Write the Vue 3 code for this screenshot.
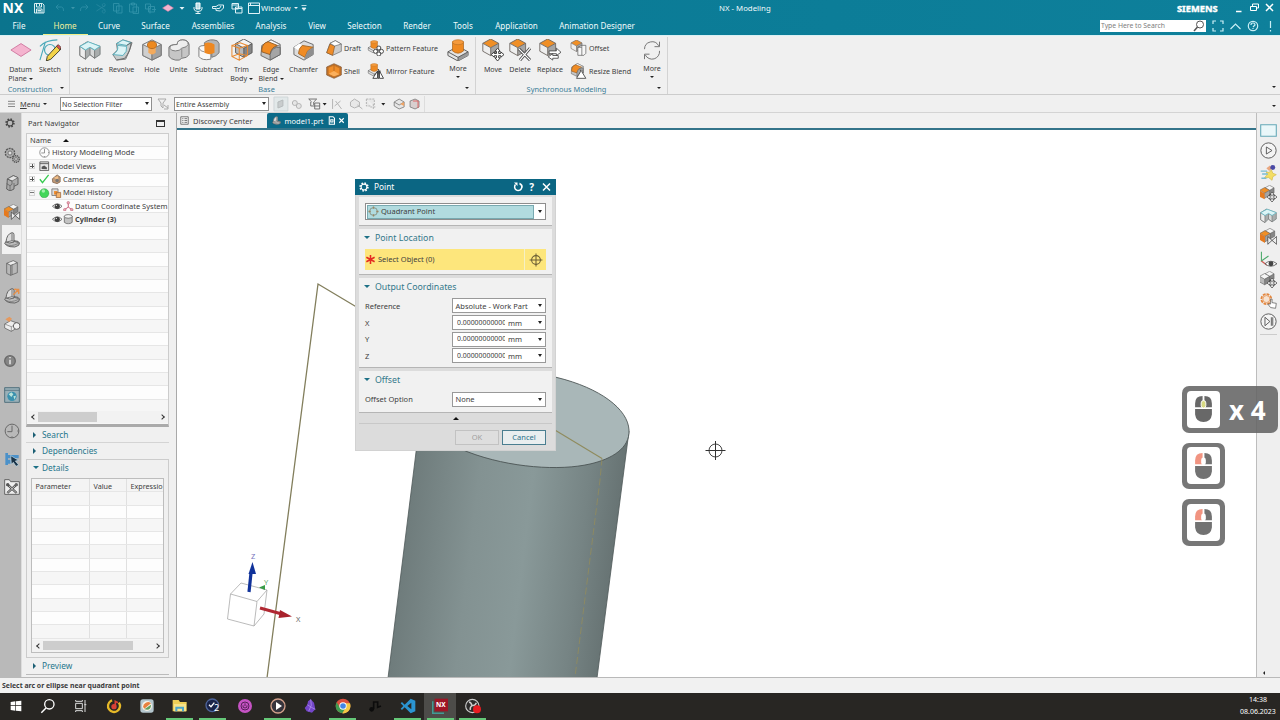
<script setup>
const tabs = [
  ['File', 38], ['Home', 54], ['Curve', 34], ['Surface', 59], ['Assemblies', 56], ['Analysis', 60],
  ['View', 32], ['Selection', 63], ['Render', 42], ['Tools', 50], ['Application', 57], ['Animation Designer', 104],
]
const quick = [
  ['save', 22], ['undo', 20], ['car', 6], ['redo', 16], ['cut', 18], ['copy', 16], ['paste', 16], ['pastes', 16],
  ['plane', 20], ['carw', 8], ['mic', 24], ['touch', 16], ['wins', 22], ['win', 12],
]
const construction = [['Datum', 'Plane', 'plane', 31], ['Sketch', '', 'sketch', 28]]
const base = [
  ['Extrude', '', 'extrude', 30], ['Revolve', '', 'revolve', 33], ['Hole', '', 'hole', 28], ['Unite', '', 'unite', 25],
  ['Subtract', '', 'subtract', 36], ['Trim', 'Body', 'trim', 29], ['Edge', 'Blend', 'edge', 30], ['Chamfer', '', 'chamfer', 35],
]
const sync = [['Move', '', 'move', 28], ['Delete', '', 'delete', 26], ['Replace', '', 'replace', 34]]
const railIcons = [
  ['gear', 19, 's'], ['gears', 24, 'm'], ['asm', 32, 'm'], ['constraint', 26, 'm'], ['part', 29, 'm on'], ['book', 27, 'm'],
  ['parto', 30, 'm'], ['reuse', 25, 'm'], ['info', 49, 'm'], ['web', 20, 'm'], ['clock', 52, 'm'], ['roles', 4, 'm'], ['tools', 52, 'm'],
]
const rightIcons = [
  ['rect', 16], ['play', 24], ['fly', 20], ['cubemove', 22], ['extrude', 22], ['constraint', 20], ['csyseye', 26],
  ['graymove', 14], ['gearhand', 28], ['next', 14],
]
const tasks = [
  ['winlogo', 32, 0], ['search', 32, 0], ['taskview', 33, 0], ['music', 33, 0], ['photo', 33, 0], ['folder', 33, 1],
  ['check2', 33, 1], ['power', 32, 0], ['player', 33, 1], ['obsidian', 32, 0], ['chrome', 33, 1], ['note', 32, 0],
  ['vscode', 33, 1], ['nx', 32, 2], ['obs', 33, 1],
]
const coords = ['X', 'Y', 'Z']
</script>

<template>
  <div class="app">
    <svg class="defs" aria-hidden="true">
      <linearGradient id="gCyl" x1="0" x2="1" y1="0" y2="0.13">
        <stop offset="0" stop-color="#667272" /><stop offset=".12" stop-color="#6e7b7b" />
        <stop offset=".4" stop-color="#839292" /><stop offset=".62" stop-color="#899999" />
        <stop offset=".85" stop-color="#768484" /><stop offset="1" stop-color="#667272" />
      </linearGradient>
      <symbol id="cubeg" viewBox="0 0 24 24">
        <path d="M12 2 21 7 12 12 3 7Z" fill="#f4f4f4" /><path d="M3 7 12 12V22L3 17Z" fill="#b9b9b9" /><path d="M12 12 21 7V17L12 22Z" fill="#868686" />
        <path d="M12 2 21 7V17L12 22 3 17V7ZM3 7 12 12 21 7M12 12V22" fill="none" stroke="#565656" stroke-width="1" stroke-linejoin="round" />
      </symbol>
      <symbol id="cubeo" viewBox="0 0 24 24">
        <path d="M12 2 21 7 12 12 3 7Z" fill="#f08f26" /><path d="M3 7 12 12V21L3 16Z" fill="#eee" /><path d="M12 12 21 7V16L12 21Z" fill="#a5a5a5" />
        <path d="M12 2 21 7V16L12 21 3 16V7ZM3 7 12 12 21 7M12 12V21" fill="none" stroke="#6b655f" stroke-width="1" stroke-linejoin="round" />
      </symbol>
      <symbol id="i-extrude" viewBox="0 0 24 24">
        <path d="M1 8 9 3 23 8V17L17 21 12 17 7 22 1 18Z" fill="#a9adad" stroke="#737b7b" /><path d="M1 8 7 12V22L1 18Z" fill="#ededed" stroke="#777" /><path d="M12 9 17 12V21L12 17Z" fill="#d6d8d8" stroke="#777" />
        <path d="M1 8 10 3 23 8 17 12 12 9 7 12Z" fill="#dcf4f6" stroke="#5bb6c3" />
      </symbol>
      <symbol id="i-revolve" viewBox="0 0 24 24">
        <path d="M6 5 13 1 23 4 20 13 16 22 6 23 2 17 7 12Z" fill="#c8cdcd" stroke="#777" />
        <path d="M6 5 13 1 22 4 17 7ZM7 7Q9 13 2 17L13 18Q18 14 17 8Z" fill="#dcf4f6" stroke="#55adbb" /><path d="M17 7 22 4Q21 14 15 21L6 23" fill="none" stroke="#666" />
      </symbol>
      <symbol id="i-hole" viewBox="0 0 24 24">
        <path d="M12 1 22 6V18L12 23 2 18V6Z" fill="#f1f1f1" stroke="#666" /><path d="M2 6 12 11V23L2 18Z" fill="#cfcfcf" stroke="#777" /><path d="M12 11 22 6V18L12 23Z" fill="#a2a2a2" stroke="#777" />
        <path d="M8 7V15Q12 19 16 15V7Z" fill="#f3aa5c" /><ellipse cx="12" cy="6.500" rx="5" ry="4" fill="#ee8a20" stroke="#b36a20" />
      </symbol>
      <symbol id="i-unite" viewBox="0 0 24 24">
        <path d="M10 6Q10 1 16 1T23 6V17Q21 21 15 21Q13 24 8 23T1 19V9Q2 6 10 6Z" fill="#c6c6c6" stroke="#707070" /><path d="M10 6Q10 1 16 1T22 6Q21 9 15 10Q13 13 8 13T2 10Q2 6 10 6Z" fill="#eee" stroke="#777" />
        <path d="M15 11V20" stroke="#888" />
      </symbol>
      <symbol id="i-subtract" viewBox="0 0 24 24">
        <path d="M7 4Q13-1 21 2L23 5V15Q20 19 15 20V10L7 8Z" fill="#b5b5b5" stroke="#737373" />
        <path d="M1 9V19Q4 24 14 22V10H8V7Q2 7 1 9Z" fill="#f9f9f9" stroke="#777" /><path d="M7 5Q12 2 18 6V15Q13 18 7 15Z" fill="#ee8821" /><path d="M1 10Q3 14 7 14" fill="none" stroke="#888" />
      </symbol>
      <symbol id="i-trim" viewBox="0 0 24 24">
        <use href="#cubeg" x="2" y="-2" /><path d="M1 7 9 10V23L1 19ZM1 7 10 4 18 7 9 10M9 10 18 7V18L9 23M1 19 9 16 18 18" fill="none" stroke="#e88a32" stroke-width="1.1" />
      </symbol>
      <symbol id="i-edge" viewBox="0 0 24 24">
        <path d="M2 7 12 1 22 6V17L11 23 1 18Z" fill="#c5c5c5" stroke="#656565" /><path d="M12 1 22 6 14 10 7 4Z" fill="#fff" stroke="#777" />
        <path d="M2 11Q3 4 9 3L19 7Q12 9 11 17L2 14Z" fill="#f08c25" stroke="#925b23" /><path d="M11 17V23L22 17V9Q13 8 11 17" fill="#a5a5a5" stroke="#666" />
      </symbol>
      <symbol id="i-chamfer" viewBox="0 0 24 24">
        <path d="M1 9 12 2 22 6V17L12 23 1 17Z" fill="#ddd" stroke="#656565" /><path d="M1 9 7 5 14 9 8 14Z" fill="#fff" /><path d="M10 7 22 9 16 13 13 20 6 16 7 11Z" fill="#f08c25" stroke="#a56623" />
        <path d="M22 9 16 13 13 20 12 23 22 17Z" fill="#8f8f8f" />
      </symbol>
      <symbol id="i-draft" viewBox="0 0 24 24"><path d="M6 5 14 1 23 6V17L10 23 1 19Z" fill="#ccc" stroke="#666" /><path d="M6 6 13 9 10 23 1 19Z" fill="#ef8c28" stroke="#8b5825" /><path d="M6 5 14 1 23 6 13 9Z" fill="#fff" stroke="#666" /></symbol>
      <symbol id="i-shell" viewBox="0 0 24 24"><path d="M12 1 23 6V18L12 23 1 18V6Z" fill="#c27328" stroke="#7b5230" /><path d="M4 7 12 4 20 8V17L12 20 4 16Z" fill="#ef8e2b" /><path d="M4 16 12 12 20 17 12 20Z" fill="#fbb05d" /><path d="M12 4V12" stroke="#a05c22" /></symbol>
      <symbol id="boss" viewBox="0 0 24 24"><path d="M1 14 12 8 23 14V18L12 24 1 18Z" fill="#e4e4e4" stroke="#555" /><path d="M12 20 23 14V18L12 24Z" fill="#999" /><path d="M1 14 12 20 23 14M12 20V24" fill="none" stroke="#555" /><path d="M6 3V13Q12 18 18 13V3Z" fill="#ef8a22" stroke="#ad6720" stroke-width=".8" /><ellipse cx="12" cy="3.500" rx="6" ry="2.700" fill="#f59a3c" stroke="#b87025" stroke-width=".7" /></symbol>
      <symbol id="i-boss" viewBox="0 0 24 24"><use href="#boss" /></symbol>
      <symbol id="four" viewBox="0 0 12 12"><path d="M6 0 8.500 3H7V5H9V3.500L12 6 9 8.500V7H7V9H8.500L6 12 3.500 9H5V7H3V8.500L0 6 3 3.500V5H5V3H3.500Z" fill="#fff" stroke="#292929" stroke-width=".8" /></symbol>
      <symbol id="i-pattern" viewBox="0 0 24 24"><use href="#boss" x="0" y="0" width="20" height="20" /><g fill="#fff" stroke="#353535" stroke-width="1.300"><circle cx="17" cy="12" r="3" /><circle cx="12" cy="17" r="3" /><circle cx="21" cy="17" r="3" /><circle cx="17" cy="21" r="3" /></g></symbol>
      <symbol id="i-mirror" viewBox="0 0 24 24"><use href="#boss" x="0" y="0" width="20" height="20" /><path d="M15 12V23H8ZM18 12V23H24Z" fill="#fff" stroke="#333" stroke-width="1.300" /><path d="M16.500 9V24" stroke="#222" /></symbol>
      <symbol id="i-move" viewBox="0 0 24 24"><use href="#cubeo" x="-2" y="-2" width="23" height="23" /><use href="#four" x="10" y="10" width="14" height="14" /></symbol>
      <symbol id="i-delete" viewBox="0 0 24 24"><use href="#cubeo" x="-2" y="-2" width="23" height="23" /><path d="M11 11 23 23M23 10 12 23" stroke="#444" stroke-width="3.200" /><path d="M11 11 23 23M23 10 12 23" stroke="#fff" stroke-width="1.400" /></symbol>
      <symbol id="i-replace" viewBox="0 0 24 24"><use href="#cubeo" x="-2" y="-2" width="23" height="23" /><path d="M11 13H19V10L24 14.500 19 18V16H11ZM21 18H15V16L10 19.500 15 23V21H21Z" fill="#fff" stroke="#444" stroke-width=".9" /></symbol>
      <symbol id="i-offset" viewBox="0 0 24 24"><use href="#cubeo" x="-2" y="-2" width="22" height="22" /><path d="M11 11 17 8H23V20L20 23H11ZM17 8V11H11M17 11V23" fill="#f7f7f7" stroke="#555" /></symbol>
      <symbol id="i-resize" viewBox="0 0 24 24"><use href="#i-edge" x="0" y="0" width="21" height="21" /><path d="M15 10V13L9 23H23L17 13V10" fill="#fff" stroke="#444" stroke-width="1.300" /></symbol>
      <symbol id="i-cycle" viewBox="0 0 24 24"><path d="M3 11A9 9 0 0 1 20 7M21 2V8H15M21 13A9 9 0 0 1 4 18M3 23V17H9" fill="none" stroke="#777" stroke-width="1.200" /></symbol>
      <symbol id="i-plane" viewBox="0 0 24 24"><path d="M1 12 12 5 23 12 12 19Z" fill="#f4b4cf" stroke="#cf779f" /></symbol>
      <symbol id="i-sketch" viewBox="0 0 24 24"><circle cx="12" cy="12" r="6" fill="none" stroke="#4aa9b9" stroke-width="1.300" /><path d="M1 23 7 3M1 8Q8 1 20 1" fill="none" stroke="#4aa9b9" stroke-width="1.200" /><path d="M9 19 20 7 24 11 13 22 8 24Z" fill="#f3d347" stroke="#3b3928" /><path d="M19 8 21 6 24 9 23 12Z" fill="#d65351" stroke="#333" stroke-width=".7" /></symbol>

      <symbol id="i-save" viewBox="0 0 24 24"><path d="M3 3H19L22 6V22H3ZM7 3V10H17V3M13 4V8M7 22V14H18V22M9 17H16M9 20H16" fill="none" stroke="#e5f4f7" stroke-width="1.900" /></symbol>
      <symbol id="i-undo" viewBox="0 0 24 24"><path d="M9 5 4 10 9 15M4 10H15Q20 11 19 18" fill="none" stroke="#2a8ca4" stroke-width="2" /></symbol>
      <symbol id="i-redo" viewBox="0 0 24 24"><path d="M15 5 20 10 15 15M20 10H9Q4 11 5 18" fill="none" stroke="#2a8ca4" stroke-width="2" /></symbol>
      <symbol id="i-cut" viewBox="0 0 24 24"><path d="M3 5 21 16M3 18 20 7M17 16a3 3 0 1 0 1 0M17 3a3 3 0 1 0 1 0" fill="none" stroke="#2b8aa2" stroke-width="1.500" /></symbol>
      <symbol id="i-copy" viewBox="0 0 24 24"><path d="M3 3H14V18H3ZM9 8H20V22H9Z" fill="#0b7690" stroke="#3293aa" stroke-width="1.700" /></symbol>
      <symbol id="i-paste" viewBox="0 0 24 24"><path d="M3 4H17V20H3ZM7 2H13V6H7ZM10 10H21V23H10Z" fill="#0b7690" stroke="#3293aa" stroke-width="1.700" /></symbol>
      <symbol id="i-pastes" viewBox="0 0 24 24"><path d="M3 4H13V14H3ZM9 9H21V20H9ZM12 12V23M16 15H24" fill="none" stroke="#3293aa" stroke-width="1.800" /></symbol>
      <symbol id="i-car" viewBox="0 0 24 24"><path d="M8 10H16L12 14.500Z" fill="#3c95aa" /></symbol>
      <symbol id="i-carw" viewBox="0 0 24 24"><path d="M7 10H17L12 15.500Z" fill="#e5f4f7" /></symbol>
      <symbol id="i-mic" viewBox="0 0 24 24"><path d="M8 2H16V14H8Z" fill="#b8dce4" stroke="#fff" stroke-width="2" /><path d="M4 10V14Q5 19 12 19T20 14V10M12 19V24M7 23H17" fill="none" stroke="#e5f4f7" stroke-width="2" /></symbol>
      <symbol id="i-touch" viewBox="0 0 24 24"><path d="M1 9H8L13 6H23V12L17 18 8 17V13H1ZM9 13H15L18 8" fill="none" stroke="#dff2f7" stroke-width="2" /></symbol>
      <symbol id="i-wins" viewBox="0 0 24 24"><path d="M2 3H15V14H2ZM2 6H15M9 10H22V22H9ZM9 13H22" fill="#0b7690" stroke="#dff2f7" stroke-width="2" /></symbol>
      <symbol id="i-win" viewBox="0 0 24 24"><path d="M1 2H23V23H1ZM1 7H23M5 2V6" fill="none" stroke="#dff2f7" stroke-width="2" /></symbol>

      <symbol id="i-gear" viewBox="0 0 24 24"><circle cx="12" cy="12" r="9" fill="none" stroke="currentColor" stroke-width="4.500" stroke-dasharray="3.600 3.470" /><circle cx="12" cy="12" r="7" fill="none" stroke="currentColor" stroke-width="2.600" /></symbol>
      <symbol id="i-gears" viewBox="0 0 24 24"><g fill="#aaa" stroke="#555"><circle cx="9" cy="9" r="7" stroke-dasharray="3 1.300" stroke-width="2" /><circle cx="9" cy="9" r="3" fill="#ddd" /><circle cx="18" cy="18" r="5" stroke-dasharray="2 1" stroke-width="2" /><circle cx="18" cy="18" r="2" fill="#eee" /></g></symbol>
      <symbol id="i-asm" viewBox="0 0 24 24"><path d="M5 6 14 1 21 4V14L15 17V21L9 24 4 21Z" fill="#aaa" stroke="#555" stroke-width="1.300" /><path d="M5 6 14 1 21 4 12 9Z" fill="#e4e4e4" stroke="#555" /><path d="M12 9V14L9 16V24M5 6 12 9M4 13 9 16M15 17V12" fill="none" stroke="#555" /></symbol>
      <symbol id="i-constraint" viewBox="0 0 24 24"><use href="#cubeg" x="5" y="-2" width="18" height="20" /><use href="#cubeo" x="-3" y="2" width="20" height="20" /><path d="M0 8 7 12V21L0 17Z" fill="#e6791d" /><path d="M11 12V23L17 17.500 11 12ZM23.500 12V23L17 17.500Z" fill="#eee" stroke="#333" /></symbol>
      <symbol id="i-part" viewBox="0 0 24 24"><path d="M1 17Q2 13 9 12L21 14Q25 16 22 20Q17 24 9 22Q3 21 1 17Z" fill="#bdbdbd" stroke="#555" stroke-width="1.300" /><path d="M2 18Q10 23 22 17" fill="none" stroke="#666" /><path d="M3 15Q4 3 12 1Q15 1 15 4V15Q8 18 3 15Z" fill="#ddd" stroke="#555" stroke-width="1.300" /><path d="M12 2V13L22 16M12 13 4 15" fill="none" stroke="#666" stroke-width="1.300" /></symbol>
      <symbol id="i-parto" viewBox="0 0 24 24"><use href="#i-part" /><path d="M15 2H22V9M14 10 22 2M17 1 23 7" stroke="#e5904a" stroke-width="2" fill="none" /></symbol>
      <symbol id="i-book" viewBox="0 0 24 24"><path d="M4 5 14 1 20 4V19L10 23 4 20Z" fill="#b8b8b8" stroke="#555" /><path d="M4 5 10 8 20 4M10 8V23M12 7V22" stroke="#555" fill="none" /><path d="M6 5 14 2 18 4 10 7Z" fill="#eee" /></symbol>
      <symbol id="i-reuse" viewBox="0 0 24 24"><path d="M1 12 10 7 21 11V17L11 23 1 18Z" fill="#ededed" stroke="#666" stroke-width="1.200" /><path d="M1 12 11 16 21 11M11 16V23" fill="none" stroke="#777" /><path d="M2 5 8 1 12 4 8 9Z" fill="#e5995e" /><circle cx="19" cy="15" r="5" fill="#f1f1f1" stroke="#555" stroke-width="1.300" /></symbol>
      <symbol id="i-info" viewBox="0 0 24 24"><circle cx="9" cy="12" r="8" fill="#858585" stroke="#686868" stroke-width="2" /><path d="M9 10V17M9 6V8" stroke="#ddd" stroke-width="2.500" /></symbol>
      <symbol id="i-web" viewBox="0 0 24 24"><path d="M1 1H23V23H1Z" fill="#9ab0b8" stroke="#466775" stroke-width="1.300" /><path d="M1 5H23" stroke="#466775" /><circle cx="12" cy="14" r="7" fill="#3a91ae" /><path d="M7 11 11 8 14 11 11 15ZM14 14 18 13 16 19Z" fill="#b9e4dc" /></symbol>
      <symbol id="i-clock" viewBox="0 0 24 24"><circle cx="12" cy="12" r="10.300" fill="none" stroke="#696969" stroke-width="1.500" /><path d="M12 4V13H5M12 20V22M20 12H22" fill="none" stroke="#696969" stroke-width="1.500" /></symbol>
      <symbol id="i-roles" viewBox="0 0 24 24"><path d="M2 3H6V21H2ZM6 6H22V11H6ZM6 13H10V19H6Z" fill="#4b91c9" /><path d="M10 7 22 14 17 15 22 21 18 23 14 17 11 20Z" fill="#1b3448" stroke="#c1deed" /></symbol>
      <symbol id="i-tools" viewBox="0 0 24 24"><path d="M1 1H8L10 4H23V23H1Z" fill="#eee" stroke="#555" stroke-width="1.300" /><path d="M5 8 19 21M19 8 5 21" stroke="#444" stroke-width="3.500" /><path d="M5 8 19 21M19 8 5 21" stroke="#ddd" stroke-width="1.300" /><circle cx="5.500" cy="8.500" r="2.500" fill="#555" /><circle cx="18.500" cy="8.500" r="2.500" fill="#666" /></symbol>

      <symbol id="i-rect" viewBox="0 0 24 24"><path d="M1 4H23V20H1Z" fill="#eaf7f9" stroke="#64a8b7" stroke-width="1.500" /></symbol>
      <symbol id="i-play" viewBox="0 0 24 24"><circle cx="12" cy="12" r="10.800" fill="#f4f4f4" stroke="#555" stroke-width="1.300" /><path d="M9 7V17L17 12Z" fill="none" stroke="#555" stroke-width="1.300" /></symbol>
      <symbol id="i-next" viewBox="0 0 24 24"><circle cx="12" cy="12" r="10.800" fill="#f4f4f4" stroke="#555" stroke-width="1.300" /><path d="M7 6V18L14 12ZM16 6V18M18 6V18" fill="none" stroke="#555" stroke-width="1.300" /></symbol>
      <symbol id="i-fly" viewBox="0 0 24 24"><path d="M9 6 14 2 17 6 13 10Z" fill="#e9a780" /><circle cx="18" cy="5" r="3.500" fill="#4a4aa5" /><path d="M16 8 18 13 23 15 18 18 17 23 12 19 6 20 10 15 9 11 13 12Z" fill="#f4de62" stroke="#d5bc49" /><path d="M1 10H10M3 14H11M2 20H9" stroke="#79bdd4" stroke-width="2" /></symbol>
      <symbol id="i-cubemove" viewBox="0 0 24 24"><use href="#cubeg" x="5" y="-2" width="17" height="19" /><use href="#cubeo" x="-3" y="2" width="19" height="19" /><path d="M0 8 6.500 12V20L0 17Z" fill="#e57b20" /><use href="#four" x="10" y="10" width="14" height="14" /></symbol>
      <symbol id="i-graymove" viewBox="0 0 24 24"><use href="#cubeg" x="5" y="-2" width="17" height="19" /><use href="#cubeg" x="-3" y="2" width="19" height="19" /><use href="#four" x="10" y="10" width="14" height="14" /></symbol>
      <symbol id="i-csyseye" viewBox="0 0 24 24"><path d="M2 1V14L12 7" fill="none" stroke="#4ba96a" stroke-width="1.500" /><path d="M2 14 10 20" stroke="#cf5c51" stroke-width="1.800" /><path d="M7 18Q15 11 24 18Q15 25 7 18Z" fill="#fff" stroke="#555" stroke-width="1.200" /><circle cx="15.500" cy="18" r="3.500" fill="#444" /></symbol>
      <symbol id="i-gearhand" viewBox="0 0 24 24"><circle cx="9" cy="10" r="7" fill="none" stroke="#e4853b" stroke-width="2.500" stroke-dasharray="4 1.400" /><circle cx="9" cy="10" r="5" fill="#f6e3d2" stroke="#e4853b" /><path d="M15 22 11 17 15 17V10H17V15L23 16 22 23Z" fill="#fff" stroke="#555" /></symbol>
      <symbol id="i-eye" viewBox="0 0 24 24"><path d="M1 12Q12 1 23 12Q12 23 1 12Z" fill="#fff" stroke="#555" stroke-width="1.800" /><circle cx="12" cy="12" r="6" fill="#3f3f3f" /><circle cx="10" cy="10" r="1.500" fill="#ddd" /></symbol>
      <symbol id="i-cyl" viewBox="0 0 24 24"><path d="M3 5V19Q12 26 21 19V5" fill="#c3c3c3" stroke="#555" stroke-width="1.600" /><ellipse cx="12" cy="5.500" rx="9" ry="4.200" fill="#f3f3f3" stroke="#555" stroke-width="1.600" /></symbol>
      <symbol id="i-target" viewBox="0 0 24 24"><circle cx="12" cy="12" r="7.500" fill="none" stroke="currentColor" stroke-width="1.800" /><path d="M12 1V23M1 12H23" stroke="currentColor" stroke-width="1.800" /></symbol>
      <symbol id="i-lens" viewBox="0 0 24 24"><circle cx="14" cy="9" r="7" fill="none" stroke="currentColor" stroke-width="2" /><path d="M9 14 2 22" stroke="currentColor" stroke-width="3" /></symbol>

      <symbol id="i-winlogo" viewBox="0 0 24 24"><path d="M4 6 11 5V11H4ZM12 5 20 4V11H12ZM4 12H11V19L4 18ZM12 12H20V20L12 19Z" fill="#fff" /></symbol>
      <symbol id="i-search" viewBox="0 0 24 24"><circle cx="14" cy="9.500" r="7" fill="none" stroke="#fff" stroke-width="2" /><path d="M9 15 2 22" stroke="#fff" stroke-width="2.200" /></symbol>
      <symbol id="i-taskview" viewBox="0 0 24 24"><path d="M4 8H14V16H4ZM4 3V5H14V3M4 21V19H14V21M18 3V21M17 10H20" fill="none" stroke="#ddd" stroke-width="1.500" /></symbol>
      <symbol id="i-music" viewBox="0 0 24 24"><circle cx="12" cy="12" r="9" fill="none" stroke="#e7b928" stroke-width="3.500" stroke-dasharray="44 12" transform="rotate(-35 12 12)" /><circle cx="12" cy="13" r="4" fill="#d94036" /><path d="M14 12V5L18 7" fill="none" stroke="#d94036" stroke-width="2.500" /></symbol>
      <symbol id="i-photo" viewBox="0 0 24 24"><rect x="2" y="2" width="20" height="20" rx="4" fill="#b4c6cd" /><circle cx="12" cy="12" r="7.500" fill="#f6f3e7" /><path d="M6 13Q8 6 15 6L18 8 8 16Z" fill="#e8813e" /><path d="M8 17 18 10Q18 20 8 17Z" fill="#65a05e" /></symbol>
      <symbol id="i-folder" viewBox="0 0 24 24"><path d="M1 3H10L12 6H22V20H1Z" fill="#efcf57" /><path d="M3 9H21V20H3Z" fill="#f7e38a" /><path d="M5 13H18V20H15V16H8V20H5Z" fill="#4ca6ca" /></symbol>
      <symbol id="i-check2" viewBox="0 0 24 24"><circle cx="11" cy="11" r="9.500" fill="#1a2348" stroke="#4d6399" stroke-width="2" /><path d="M6 10 9 13 14 7" fill="none" stroke="#fff" stroke-width="2" /></symbol>
      <symbol id="i-power" viewBox="0 0 24 24"><circle cx="12" cy="12" r="10.500" fill="#c653c4" /><circle cx="12" cy="12" r="6" fill="none" stroke="#55205a" stroke-width="1.500" /><path d="M12 8V12M9 11Q8 15 12 15T15 11" fill="none" stroke="#3d1440" stroke-width="1.200" /></symbol>
      <symbol id="i-player" viewBox="0 0 24 24"><circle cx="12" cy="12" r="10.500" fill="#37343c" stroke="#d2a08b" stroke-width="2" /><path d="M9 6V18L18 12Z" fill="#fff" /></symbol>
      <symbol id="i-obsidian" viewBox="0 0 24 24"><path d="M13 2 18 7 20 17 15 22 7 20 4 15 8 10 9 5Z" fill="#7446ca" /><path d="M13 2 14 11 10 20M8 10 14 14 20 17" stroke="#b99cf0" fill="none" /></symbol>
      <symbol id="i-chrome" viewBox="0 0 24 24"><circle cx="12" cy="12" r="11" fill="#dc4f3e" /><path d="M2.500 6.500A11 11 0 0 0 11 23L17 14 12 12 7 14Z" fill="#3f9d51" /><path d="M22.500 8A11 11 0 0 1 11 23L17 13 14 8Z" fill="#f2c846" /><circle cx="12" cy="12" r="5.500" fill="#fff" /><circle cx="12" cy="12" r="4.200" fill="#4285e8" /></symbol>
      <symbol id="i-note" viewBox="0 0 24 24"><path d="M10 17V6H16M16 5V14L21 12" fill="none" stroke="#0c0c0c" stroke-width="2.500" /><circle cx="7" cy="17" r="3.500" fill="#0c0c0c" /></symbol>
      <symbol id="i-vscode" viewBox="0 0 24 24"><path d="M16 1 23 4V20L16 23 7 14 3 18 1 16 5 12 1 8 3 6 7 10ZM17 7 11 12 17 17Z" fill="#2b94d1" fill-rule="evenodd" /></symbol>
      <symbol id="i-nx" viewBox="0 0 24 24"><path d="M1 5V23H18" fill="none" stroke="#429a94" stroke-width="2.500" /><path d="M4 1H24V20H4Z" fill="#9e1525" /></symbol>
      <symbol id="i-obs" viewBox="0 0 24 24"><circle cx="11" cy="12" r="10" fill="#2c2b2b" stroke="#ccc" stroke-width="1.700" /><path d="M6 6Q10 7 10 11M17 7Q15 12 11 11M8 18Q7 13 11 11" fill="none" stroke="#ccc" stroke-width="2.200" /><circle cx="18" cy="17" r="6" fill="#e71c22" /></symbol>
    </svg>

    <header class="head">
      <div class="titlebar">
        <b class="logo">NX</b>
        <span v-for="q in quick" :key="q[0]" class="q" :style="{ width: q[1] + 'px' }"><svg><use :href="'#i-' + q[0]" /></svg></span>
        <span class="wtext">Window</span><i class="dn w" />
        <svg class="cust" viewBox="0 0 8 8"><path d="M1.500 1.500H6.500M2 4H6L4 6.500Z" fill="#e5f4f7" stroke="#e5f4f7" stroke-width=".8" /></svg>
        <span class="doc">NX - Modeling</span>
        <b class="brand">SIEMENS</b>
        <svg class="winbtn" viewBox="0 0 44 12"><path d="M2 9.500H7.500M32 2 39 9M39 2 32 9" stroke="#fff" stroke-width="1.500" /><path d="M16.500 4.500H22.500V8.500H16.500ZM18.500 4V2H24.500V6H23" fill="none" stroke="#fff" /></svg>
      </div>
      <nav class="tabs">
        <span v-for="t in tabs" :key="t[0]" :class="{ cur: t[0] === 'Home' }" :style="{ width: t[1] + 'px' }">{{ t[0] }}</span>
        <div class="find"><span>Type Here to Search</span><svg><use href="#i-lens" /></svg></div>
        <svg class="headicons" viewBox="0 0 64 14"><g fill="none" stroke="#c9eef5" stroke-width="1.200"><path d="M2 5V2H5M9 2H12V5M12 9V12H9M5 12H2V9M19.500 10 24.500 5 29.500 10" /><circle cx="42" cy="7" r="4.700" /><path d="M40 6Q40 4 42 4T44 6L42 8M42 9V10M59.500 2V9M59.500 11V12.500" /></g></svg>
      </nav>
    </header>

    <section class="ribbon">
      <div class="group g1">
        <div class="btns">
          <div v-for="b in construction" :key="b[0]" class="big" :style="{ width: b[3] + 'px' }"><svg><use :href="'#i-' + b[2]" /></svg><span>{{ b[0] }}</span><span v-if="b[1]">{{ b[1] }} <i class="dn" /></span></div>
        </div>
        <div class="glabel">Construction<i class="dn" /></div>
      </div>
      <div class="group g2">
        <div class="btns">
          <div v-for="b in base" :key="b[0]" class="big" :style="{ width: b[3] + 'px' }"><svg><use :href="'#i-' + b[2]" /></svg><span>{{ b[0] }}</span><span v-if="b[1]">{{ b[1] }} <i class="dn" /></span></div>
          <div class="pair p1"><div><svg><use href="#i-draft" /></svg>Draft</div><div><svg><use href="#i-shell" /></svg>Shell</div></div>
          <div class="pair p2"><div><svg><use href="#i-pattern" /></svg>Pattern Feature</div><div><svg><use href="#i-mirror" /></svg>Mirror Feature</div></div>
          <div class="big more"><svg><use href="#i-boss" /></svg><span>More</span><i class="dn" /></div>
        </div>
        <div class="glabel">Base<i class="dn" /></div>
      </div>
      <div class="group g3">
        <div class="btns">
          <div v-for="b in sync" :key="b[0]" class="big" :style="{ width: b[3] + 'px' }"><svg><use :href="'#i-' + b[2]" /></svg><span>{{ b[0] }}</span></div>
          <div class="pair p3"><div><svg><use href="#i-offset" /></svg>Offset</div><div><svg><use href="#i-resize" /></svg>Resize Blend</div></div>
          <div class="big more"><svg class="cyc"><use href="#i-cycle" /></svg><span>More</span><i class="dn" /></div>
        </div>
        <div class="glabel">Synchronous Modeling<i class="dn" /></div>
      </div>
      <i class="dn end" />
    </section>

    <section class="selbar">
      <svg class="burger" viewBox="0 0 8 8"><path d="M0 1.500H8M0 4.500H8M0 7.500H8" stroke="#555" stroke-width=".8" /></svg>
      <span class="menu"><u>M</u>enu</span><i class="dn" />
      <div class="combo c1">No Selection Filter<i class="dn" /></div>
      <svg class="filt" viewBox="0 0 14 14"><path d="M2 2H10L7 6V11L5 9V6ZM8 8 12 11M12 8V12H8" fill="none" stroke="#aaa" /></svg>
      <div class="combo c2">Entire Assembly<i class="dn" /></div>
      <svg class="seltools" viewBox="0 0 156 16">
        <path d="M5 1H19V15H5Z" fill="#e2e8e9" stroke="#cfd6d8" /><path d="M9 12V6L14 4V10Z" fill="#c8cccd" stroke="#b5babb" />
        <g fill="#e6e6e6" stroke="#b3b3b3"><circle cx="26" cy="7" r="2.500" /><circle cx="30" cy="10" r="2.500" /></g>
        <path d="M40 3H48L45 6V9M42 6V10H51V13H46V7H51V10M40 3 43 6" fill="none" stroke="#666" stroke-width=".9" />
        <path d="M54 7H58L56 9.500ZM113 7H117L115 9.500Z" fill="#222" />
        <g fill="#e8e8e8" stroke="#b3b3b3"><path d="M64 3V13M66 10 72 5M67 5 73 13" /><path d="M82 6 86 3 91 6V10L86 12 82 10ZM89 9 94 13" /><path d="M98 3H106V10M98 3V10H102M105 8V14M102 11H108" stroke-dasharray="2 1" /></g>
        <path d="M126 6 131 3 136 6V11L131 13 126 10Z" fill="#e6e6e6" stroke="#777" stroke-width=".8" /><path d="M126 6 131 9 136 6" fill="none" stroke="#777" stroke-width=".8" /><path d="M132 8 136 6V10Z" fill="#f0a464" />
        <path d="M142 5 147 3 151 5V11L147 13 142 11Z" fill="#d8cfcf" stroke="#777" stroke-width=".8" /><path d="M145 5H150V12" fill="none" stroke="#d66" />
      </svg>
      <i class="dn end" />
    </section>

    <main class="work">
      <aside class="rail">
        <div v-for="r in railIcons" :key="r[0]" :class="['ri', r[2]]" :style="{ height: r[1] + 'px' }"><svg><use :href="'#i-' + r[0]" /></svg></div>
      </aside>

      <aside class="nav">
        <div class="navhead"><span>Part Navigator</span><i class="max" /></div>
        <div class="tree">
          <div class="th">Name <i class="up" /></div>
          <div class="tr d0"><svg class="clk"><use href="#i-clock" /></svg>History Modeling Mode</div>
          <div class="tr"><i class="pm plus" /><svg class="wide" viewBox="0 0 24 24"><path d="M2 2H22V22H2ZM2 6H22" fill="#e8e8e8" stroke="#555" stroke-width="2" /><path d="M6 18V13L12 10 18 15V19Z" fill="#555" /></svg>Model Views</div>
          <div class="tr"><i class="pm plus" /><svg viewBox="0 0 24 24"><path d="M2 12 8 20 22 2" fill="none" stroke="#35ca4e" stroke-width="3" /></svg><svg viewBox="0 0 24 24"><path d="M3 11 14 2 21 7V18L14 22 4 19Z" fill="#c19b78" stroke="#73543d" stroke-width="1.500" /><path d="M7 8 16 5V16" fill="#f5c187" /><circle cx="14" cy="15" r="4" fill="#777" /></svg>Cameras</div>
          <div class="tr"><i class="pm" /><svg viewBox="0 0 24 24"><circle cx="12" cy="12" r="10.500" fill="#42d65a" stroke="#248f38" /><circle cx="10" cy="7" r="4" fill="#a3f1ad" /></svg><svg viewBox="0 0 24 24"><path d="M2 2H16V17H2Z" fill="#ddd" stroke="#777" stroke-width="2" /><path d="M7 7H15V15H7Z" fill="#f08b29" /><path d="M12 11 22 10V22H12Z" fill="#f5b46d" stroke="#8d572e" stroke-width="1.500" /></svg>Model History</div>
          <div class="tr d2"><svg><use href="#i-eye" /></svg><svg viewBox="0 0 24 24"><path d="M12 4V14L3 20M12 14 21 20" fill="none" stroke="#c34f6d" stroke-width="2" /><circle cx="12" cy="4" r="3" fill="#efa4b5" stroke="#a84e62" /><circle cx="4" cy="20" r="3" fill="#efa4b5" stroke="#a84e62" /><circle cx="20" cy="20" r="3" fill="#efa4b5" stroke="#a84e62" /></svg>Datum Coordinate System</div>
          <div class="tr d2 b"><svg><use href="#i-eye" /></svg><svg><use href="#i-cyl" /></svg>Cylinder (3)</div>
          <div v-for="n in 14" :key="n" class="tr" />
          <div class="hs h1"><i class="ar l" /><i class="thumb" /><i class="ar r" /></div>
        </div>
        <div class="fold f1"><i class="rt" />Search</div>
        <div class="fold f2"><i class="rt" />Dependencies</div>
        <div class="details">
          <div class="fold f3"><i class="dnt" />Details</div>
          <div class="table">
            <div class="dr dh"><span>Parameter</span><span>Value</span><span>Expressio</span></div>
            <div v-for="n in 11" :key="n" class="dr"><span /><span /><span /></div>
            <div class="hs h2"><i class="ar l" /><i class="thumb" /><i class="ar r" /></div>
          </div>
        </div>
        <div class="fold f4"><i class="rt" />Preview</div>
      </aside>

      <section class="stage">
        <div class="files">
          <span class="ft"><svg viewBox="0 0 24 24"><path d="M2 2H22V22H2Z" fill="none" stroke="#555" stroke-width="2" /><path d="M6 7H9M6 12H9M6 17H9M12 7H19M12 12H19M12 17H19" stroke="#555" stroke-width="2" /></svg>Discovery Center</span>
          <span class="ft on"><svg><use href="#i-part" /></svg>model1.prt<svg class="pg" viewBox="0 0 12 12"><path d="M3 1H8L10 3V11H3ZM5 5H8V8H5Z" fill="none" stroke="#fff" stroke-width="1.400" /></svg><svg class="cl" viewBox="0 0 12 12"><path d="M3 3 9 9M9 3 3 9" stroke="#fff" stroke-width="1.500" /></svg></span>
        </div>
        <svg class="canvas" viewBox="177 130 1079 547">
          <path d="M420 420 388 678H597L629 431Z" fill="url(#gCyl)" stroke="#4e5858" stroke-width=".8" />
          <path d="M418 406C416 380 460 366 497 368C530 370 540 373 557 377.500C600 388 628 409 629 430C630 448 612 459 590 464C560 471 510 468 468 452C440 441 419 425 418 406Z" fill="#a9b7b8" stroke="#4c5555" stroke-width=".9" />
          <path d="M540 421 602 458.500" stroke="#8f8b5d" stroke-width="1.100" /><path d="M602 458.500 600 480 575 677" fill="none" stroke="#8f8a60" stroke-width=".9" stroke-dasharray="7 3" />
          <path d="M380 321 318 284 267 678" fill="none" stroke="#827e5c" stroke-width="1.300" />
          <g fill="none" stroke="#aaa" stroke-width=".8"><path d="M230.500 594 257 601.500 254 626 227.500 619ZM230.500 594 241 583 267 590 257 601.500M267 590 264 614 254 626" /></g>
          <path d="M249 592 251 573" stroke="#10329a" stroke-width="3.200" /><path d="M248.500 574 252.500 562 256 574Z" fill="#10329a" />
          <path d="M260 608 280 613.500" stroke="#b02832" stroke-width="3.200" /><path d="M280 610 292 616.500 278.500 618Z" fill="#a9232d" />
          <path d="M259 587.500 265 585V590Z" fill="#379c47" />
          <g font-family="Noto Sans, sans-serif" font-size="7.500"><text x="251" y="558.500" fill="#7773bd">Z</text><text x="264" y="585" fill="#65aa71">Y</text><text x="296" y="621.500" fill="#666">X</text></g>
          <g fill="none" stroke="#333"><circle cx="715.500" cy="450.500" r="6.500" stroke-width=".9" /><path d="M715.500 441V460M705.500 450.500H725.500" /></g>
        </svg>
      </section>

      <aside class="right">
        <div v-for="r in rightIcons" :key="r[0]" :style="{ height: r[1] + 'px' }"><svg><use :href="'#i-' + r[0]" /></svg></div>
        <hr />
        <i class="dn end" />
      </aside>
    </main>

    <div class="status">Select arc or ellipse near quadrant point</div>

    <footer class="taskbar">
      <div v-for="t in tasks" :key="t[0]" :class="['task', { run: t[2] > 0, act: t[2] === 2 }]" :style="{ width: t[1] + 'px' }"><svg><use :href="'#i-' + t[0]" /></svg><b v-if="t[0] === 'nx'">NX</b><b v-if="t[0] === 'check2'" class="two">2</b></div>
      <div class="clock"><span>14:38</span><span>08.06.2023</span></div>
    </footer>

    <div class="dialog">
      <div class="dhead"><svg class="dg"><use href="#i-gear" /></svg><span>Point</span><svg class="dbt" viewBox="0 0 42 12"><path d="M6.500 3.500A3.600 3.600 0 1 0 10.500 2.500Q13.500 4 13 6.500" fill="none" stroke="#fff" stroke-width="1.500" /><path d="M5 1.500H8.500V5Z" fill="#fff" /><path d="M34 2.500 41 9.500M41 2.500 34 9.500" stroke="#fff" stroke-width="1.500" /></svg><b>?</b></div>
      <div class="sec s1"><div class="dcombo"><span><svg viewBox="0 0 24 24"><circle cx="12" cy="12" r="8.500" fill="none" stroke="#7d8b7d" stroke-width="1.800" /><path d="M12 1V6M12 18V23M1 12H6M18 12H23" stroke="#9a8763" stroke-width="3" /></svg>Quadrant Point</span><i class="dn" /></div></div>
      <div class="sec s2"><div class="st"><i class="dnt" />Point Location</div>
        <div class="pick"><svg viewBox="0 0 12 12"><path d="M6 1V11M1.500 3.500 10.500 8.500M10.500 3.500 1.500 8.500" stroke="#e42c22" stroke-width="1.700" /></svg><span>Select Object (0)</span><div><svg><use href="#i-target" /></svg></div></div>
      </div>
      <div class="sec s3"><div class="st"><i class="dnt" />Output Coordinates</div>
        <div class="row"><label>Reference</label><div class="fld">Absolute - Work Part<i class="dn" /></div></div>
        <div v-for="c in coords" :key="c" class="row"><label>{{ c }}</label><div class="fld"><span class="num">0.00000000000</span>mm<i class="dn" /></div></div>
      </div>
      <div class="sec s4"><div class="st"><i class="dnt" />Offset</div>
        <div class="row"><label>Offset Option</label><div class="fld">None<i class="dn" /></div></div>
      </div>
      <div class="coll"><i class="up" /></div>
      <div class="acts"><span class="ok">OK</span><span>Cancel</span></div>
    </div>

    <div class="keys">
      <div class="key wide"><div><svg viewBox="0 0 20 30"><path d="M1 13V9Q1 1 9 1V13ZM11 1Q19 1 19 9V13H11ZM1 15H19V21Q18 29 10 29T1 21Z" fill="#686868" /><rect x="7.500" y="6" width="5" height="8" rx="2.500" fill="#d7d982" stroke="#fff" /></svg></div><b>x 4</b></div>
      <div v-for="n in 2" :key="n" class="key"><div><svg viewBox="0 0 20 30"><path d="M11 1Q19 1 19 9V13H11ZM1 15H19V21Q18 29 10 29T1 21Z" fill="#727272" /><path d="M1 13V9Q1 1 9 1V13Z" fill="#f19481" /><rect x="7.500" y="6" width="5" height="8" rx="2.500" fill="#fff" /></svg></div></div>
    </div>
  </div>
</template>

<style>
body { overflow: hidden; background: #efefef; }
</style>

<style scoped>
.app { position: relative; width: 1280px; height: 720px; display: flex; flex-direction: column; background: #f0f0f0; color: #3d3d3d; font: 7.5px/10px "Noto Sans", sans-serif; white-space: nowrap; overflow: hidden; }
.app * { box-sizing: border-box; }
.defs { position: absolute; width: 0; height: 0; }
i { flex: none; }
svg { flex: none; display: block; }
.dn { display: inline-block; width: 0; height: 0; border: 2px solid transparent; border-top: 2.500px solid #222; border-bottom: 0; }
.dn.w { border-top-color: #e5f4f7; }
.up { display: inline-block; width: 0; height: 0; border: 3px solid transparent; border-bottom: 3px solid #111; border-top: 0; }
.rt { width: 0; height: 0; border: 3px solid transparent; border-left: 3px solid #1c5f74; border-right: 0; }
.dnt { width: 0; height: 0; border: 3px solid transparent; border-top: 3.500px solid #1d7086; border-bottom: 0; }

.head { height: 36px; background: linear-gradient(90deg, #0b748d, #0a7a95 30%, #0e809b); border-bottom: 1.500px solid #d9f0f4; color: #f0fafb; }
.titlebar { height: 16px; display: flex; align-items: center; }
.logo { width: 28px; padding-left: 2.500px; font-size: 14px; line-height: 14px; color: #fff; }
.q { display: flex; justify-content: center; }
.q svg { width: 12px; height: 12px; overflow: visible; }
.wtext { width: 34px; padding-left: 1px; font-size: 7.800px; }
.cust { width: 8px; height: 8px; margin-left: 2px; }
.doc { margin-left: 411px; font-size: 7.800px; width: 60px; }
.brand { margin-left: auto; font-size: 9.300px; width: 49px; color: #fff; line-height: 16px; padding-top: 1px; -webkit-text-stroke: .4px #fff; }
.winbtn { width: 44px; height: 12px; margin-right: 2px; margin-left: 8px; }
.tabs { height: 19px; display: flex; align-items: center; font-size: 8.100px; }
.tabs > span { height: 18px; line-height: 18px; text-align: center; }
.tabs .cur { color: #f1ef9c; position: relative; }
.tabs .cur::after { content: ""; position: absolute; left: 5px; right: 4px; bottom: 0; height: 1px; background: #f4f08a; }
.find { margin-left: auto; width: 106px; height: 12px; margin-top: 1px; background: #fff; color: #7c7c7c; font-size: 6.800px; line-height: 12px; padding: 0 1px; display: flex; justify-content: space-between; }
.find svg { width: 12px; height: 12px; color: #555; }
.headicons { width: 64px; height: 14px; margin: 1px 5px 0 5px; }

.ribbon { height: 59px; display: flex; border-bottom: 1px solid #ccc; font-size: 7.100px; position: relative; }
.group { height: 57px; margin-top: 1px; display: flex; flex-direction: column; border-right: 1px solid #d3d3d3; }
.g1 { width: 70px; padding-left: 5px; } .g2 { width: 406px; padding-left: 5px; } .g3 { width: 192px; padding-left: 3px; }
.btns { display: flex; height: 47px; }
.big { display: flex; flex-direction: column; align-items: center; line-height: 8.500px; padding-top: 2px; }
.big svg { width: 22px; height: 22px; margin-bottom: 4px; }
.big .dn { vertical-align: 1px; }
.more { width: 28px; } .more svg { margin-bottom: 3px; } .more .dn { margin-top: 3px; }
.more svg.cyc { width: 20px; }
.pair { display: flex; flex-direction: column; gap: 5px; padding-top: 2px; }
.pair div { display: flex; align-items: center; height: 18px; gap: 2px; }
.pair svg { width: 16px; height: 16px; }
.p1 { width: 41px; padding-left: 5px; } .p2 { width: 82px; padding-left: 5px; } .p2 svg { width: 17px; }
.p3 { width: 71px; padding-left: 3px; } .p3 svg { width: 17px; }
.glabel { position: relative; text-align: center; color: #3a7c96; font-size: 7.400px; line-height: 10px; }
.g1 .glabel { width: 50px; }
.g2 .glabel { padding-right: 17px; } .g3 .glabel { padding-right: 13px; }
.glabel .dn { position: absolute; right: 6px; top: 2.500px; } .g1 .glabel .dn { right: -9px; }
.end { position: absolute; right: 4px; bottom: 6px; }

.selbar { height: 18px; display: flex; align-items: center; border-bottom: 1px solid #d4d4d4; font-size: 7.100px; position: relative; }
.selbar .end { bottom: 5px; }
.burger { width: 7px; height: 7px; margin: 0 5px 0 8px; }
.menu { width: 23px; font-size: 7.400px; }
.combo { height: 14px; border: 1px solid #8f8f8f; background: #fff; display: flex; align-items: center; justify-content: space-between; padding: 0 2px 0 1px; }
.combo .dn { border-width: 2.500px 2.500px 0; border-top-width: 3px; }
.c1 { width: 92px; margin-left: 13px; } .c2 { width: 95px; }
.filt { width: 14px; height: 14px; margin: 0 4px 0 4px; }
.seltools { width: 156px; height: 16px; border-right: 1px solid #ddd; }

.work { height: 565px; display: flex; border-bottom: 1px solid #b9b9b9; }
.rail { width: 21px; background: #b9b9b9; padding-top: 0; }
.ri { display: flex; align-items: center; justify-content: center; padding-left: 3px; color: #444; }
.ri svg { width: 16px; height: 16px; }
.ri.s { margin-bottom: 11px; }
.ri.s svg { width: 10px; height: 10px; margin-right: 4px; }
.ri.on { background: #f1f1f1; margin-left: 2px; padding-left: 1px; }
.nav { width: 156px; padding: 0 7px 0 4px; border-right: 1px solid #a9a9a9; border-left: 1px solid #ddd; }
.navhead { height: 20px; display: flex; justify-content: space-between; align-items: center; padding: 0 4px 0 2px; }
.max { width: 9px; height: 7px; border: 1px solid #333; border-top-width: 2px; margin-top: 1px; }
.tree { height: 294px; border: 1px solid #ccc; border-bottom: 3px solid #aaa; background: #f6f6f6; overflow: hidden; display: flex; flex-direction: column; }
.th { height: 13px; padding-left: 3px; line-height: 13px; flex: none; border-bottom: 1px solid #e0e0e0; }
.th .up { margin-left: 10px; vertical-align: 1.500px; }
.tr { height: 13.300px; flex: none; display: flex; align-items: center; gap: 1.500px; border-bottom: 1px solid #e6e6e6; padding-left: 2px; line-height: 11px; padding-bottom: .5px; }
.tr:nth-child(even) { background: #fdfdfd; }
.tr svg { width: 10.500px; height: 10.500px; }
.tr .wide { margin-right: 1px; }
.tr.d0 { padding-left: 12px; } .tr.d0 svg { width: 11px; height: 11px; margin-right: .5px; }
.tr.d2 { padding-left: 24.500px; gap: 1.300px; }
.b { font-weight: bold; font-size: 7.300px; }
.pm { width: 6px; height: 6px; margin-right: 2.500px; background: linear-gradient(#777, #777) center / 4px 1px no-repeat; border: 1px solid #d5d5d5; }
.plus { background: linear-gradient(#555, #555) center / 4px 1px no-repeat, linear-gradient(#555, #555) center / 1px 4px no-repeat; }
.hs { display: flex; align-items: center; height: 12px; background: #f2f2f2; position: relative; flex: none; }
.h1 { margin-top: -2px; padding: 0 4px; } .h1 .thumb { width: 59px; height: 10px; background: #cdcdcd; margin-left: 2px; }
.ar { width: 4px; height: 4px; border: solid #333; border-width: 1.200px 0 0 1.200px; transform: rotate(-45deg); margin-left: 1px; }
.ar.r { transform: rotate(135deg); margin-left: auto; }
.fold { display: flex; align-items: center; gap: 6px; height: 16px; padding-left: 7px; color: #25768c; font-size: 8.300px; border-bottom: 1px solid #d4d4d4; }
.f1 { height: 16px; padding-top: 1px; }
.f2 { height: 16px; border: 0; }
.details { border: 1px solid #ccc; height: 199px; padding: 0 4px 0 4px; }
.fold.f3 { border: 0; padding: 0 0 3px 2px; gap: 3px; height: 18px; }
.f4 { height: 17px; border-color: #bbb; }
.table { border: 1px solid #bdbdbd; height: 175px; overflow: hidden; background: #f6f6f6; }
.dr { display: grid; grid-template-columns: 58px 37px 1fr; height: 13.300px; border-bottom: 1px solid #e6e6e6; font-size: 7.200px; line-height: 14px; }
.dr:nth-child(odd) { background: #fdfdfd; }
.dr span { padding-left: 3.500px; border-right: 1px solid #e0e0e0; }
.dr span:last-child { border: 0; }
.dh { background: #f4f4f4 !important; }
.h2 { padding: 0 4px; margin-top: 1px; } .h2 .thumb { width: 90px; height: 9px; background: #cdcdcd; margin-left: 2px; }

.stage { width: 1079px; display: flex; flex-direction: column; }
.files { height: 17px; display: flex; background: #f1f1f1; border-bottom: 2px solid #34748a; }
.ft { display: flex; align-items: center; width: 90px; padding-left: 3px; gap: 4px; }
.ft svg { width: 9px; height: 9px; }
.ft.on { width: 81px; background: #0c6a88; color: #fff; padding-left: 4.500px; border-radius: 2px 2px 0 0; }
.ft .pg { margin-left: -1px; } .ft .cl { margin-left: -3px; }
.canvas { width: 1079px; height: 547px; background: #fff; }
.right { position: relative; width: 24px; border-left: 1px solid #bdbdbd; padding: 9px 0 0 0; background: #efefef; }
.right div { display: flex; justify-content: center; align-items: center; }
.right svg { width: 17px; height: 17px; }
.right hr { margin: 6px 3px; border: 0; height: 1px; background: #ccc; }
.right .end { right: 14px; bottom: 3px; transform: rotate(90deg); }

.status { height: 15px; flex: none; padding-left: 2px; font-weight: bold; font-size: 6.900px; line-height: 15px; color: #3b3b3b; background: #f1f1f1; }
.taskbar { height: 27px; flex: none; background: #282623; display: flex; color: #fff; }
.task { display: flex; align-items: center; justify-content: center; position: relative; padding-bottom: 2px; }
.task svg { width: 16px; height: 16px; }
.task.run { background: linear-gradient(#65c878, #65c878) center bottom / 27px 2px no-repeat; }
.task.act { background-color: #4d4c49; }
.task b { position: absolute; left: 12px; top: 7px; font-size: 6.500px; }
.task .two { left: 18px; top: 10px; font-size: 9px; font-weight: normal; }
.clock { margin-left: auto; width: 44px; display: flex; flex-direction: column; align-items: center; font-size: 7px; line-height: 11.500px; padding-top: 1px; }

.dialog { position: absolute; left: 355px; top: 179px; width: 201px; height: 272px; background: #dcdcdc; border: 1px solid #d2d2d2; border-top: 0; display: flex; flex-direction: column; }
.dhead { height: 15.500px; margin: 0 -1px 2.500px; background: #0b6683; color: #fff; display: flex; align-items: center; padding-left: 4px; font-size: 8.300px; position: relative; }
.dg { width: 10px; height: 10px; margin-right: 5px; color: #fff; }
.dbt { width: 42px; height: 12px; margin-left: auto; margin-right: 5px; }
.dhead b { position: absolute; right: 22px; font-size: 10px; }
.sec { margin: 0 3px 3px; background: #f1f1f1; border-bottom: 1px solid #b5b5b5; padding: 0 6px; }
.s1 { height: 29px; padding-top: 6px; } .s2 { height: 46px; } .s3 { height: 90px; } .s4 { height: 42px; margin-bottom: 0; }
.dcombo { height: 17px; border: 1px solid #8d8d8d; background: #fff; display: flex; align-items: center; padding: 0 1px; }
.dcombo span { width: 167px; height: 14px; line-height: 12px; background: #b1dbdf; border: 1px solid #78a9b0; display: flex; align-items: center; gap: 2px; padding-bottom: 1px; }
.dcombo svg { width: 11px; height: 11px; }
.dcombo .dn { margin-left: 4px; }
.dialog .dn { border-width: 3px 2.500px 0; }
.st { display: flex; align-items: center; gap: 5px; height: 17px; color: #33788a; font-size: 8.750px; margin-left: -1px; }
.pick { display: flex; align-items: center; height: 21px; margin-top: 3px; background: #fde67c; }
.pick > svg { width: 11px; height: 11px; margin-right: 2px; }
.pick > span { margin-top: -1px; }
.pick div { margin-left: auto; width: 22px; height: 21px; border-left: 1px solid #f5f0c4; display: flex; align-items: center; justify-content: center; color: #6d5f35; }
.pick div svg { width: 14px; height: 14px; }
.row { display: flex; justify-content: space-between; align-items: center; height: 16.700px; }
.s3 .row:nth-child(2) { margin-top: 2.500px; } .s4 .row { margin-top: 3px; }
.fld { width: 94px; height: 15px; background: #fff; border: 1px solid #999; display: flex; align-items: center; padding: 0 3px 0 2.500px; }
.fld .dn { margin-left: auto; }
.num { width: 48px; margin-left: 1.500px; margin-right: 3px; overflow: hidden; font-size: 6.900px; }
.coll { height: 11px; margin: 0 3px; border-bottom: 1px solid #c8c8c8; display: flex; align-items: center; justify-content: center; }
.acts { display: flex; justify-content: flex-end; gap: 3px; padding: 6px 9px 0 0; }
.acts span { width: 44px; height: 15px; border: 1px solid #4a7e90; line-height: 13px; text-align: center; color: #2d728a; background: #e9eeef; }
.acts .ok { border-color: #c2c2c2; color: #a0a0a0; background: #dedede; }

.keys { position: absolute; left: 1182px; top: 386px; display: flex; flex-direction: column; gap: 10px; }
.key { width: 43px; height: 46.500px; border-radius: 7px; background: rgba(100, 100, 100, .88); padding: 5px; display: flex; align-items: center; }
.key div { width: 33px; height: 37px; background: #fff; border-radius: 4px; display: flex; align-items: center; justify-content: center; }
.key svg { width: 19px; height: 28px; }
.key.wide { width: 96px; }
.key b { margin-left: 9px; color: #fff; font-size: 26px; line-height: 28px; padding-top: 2px; }
</style>
